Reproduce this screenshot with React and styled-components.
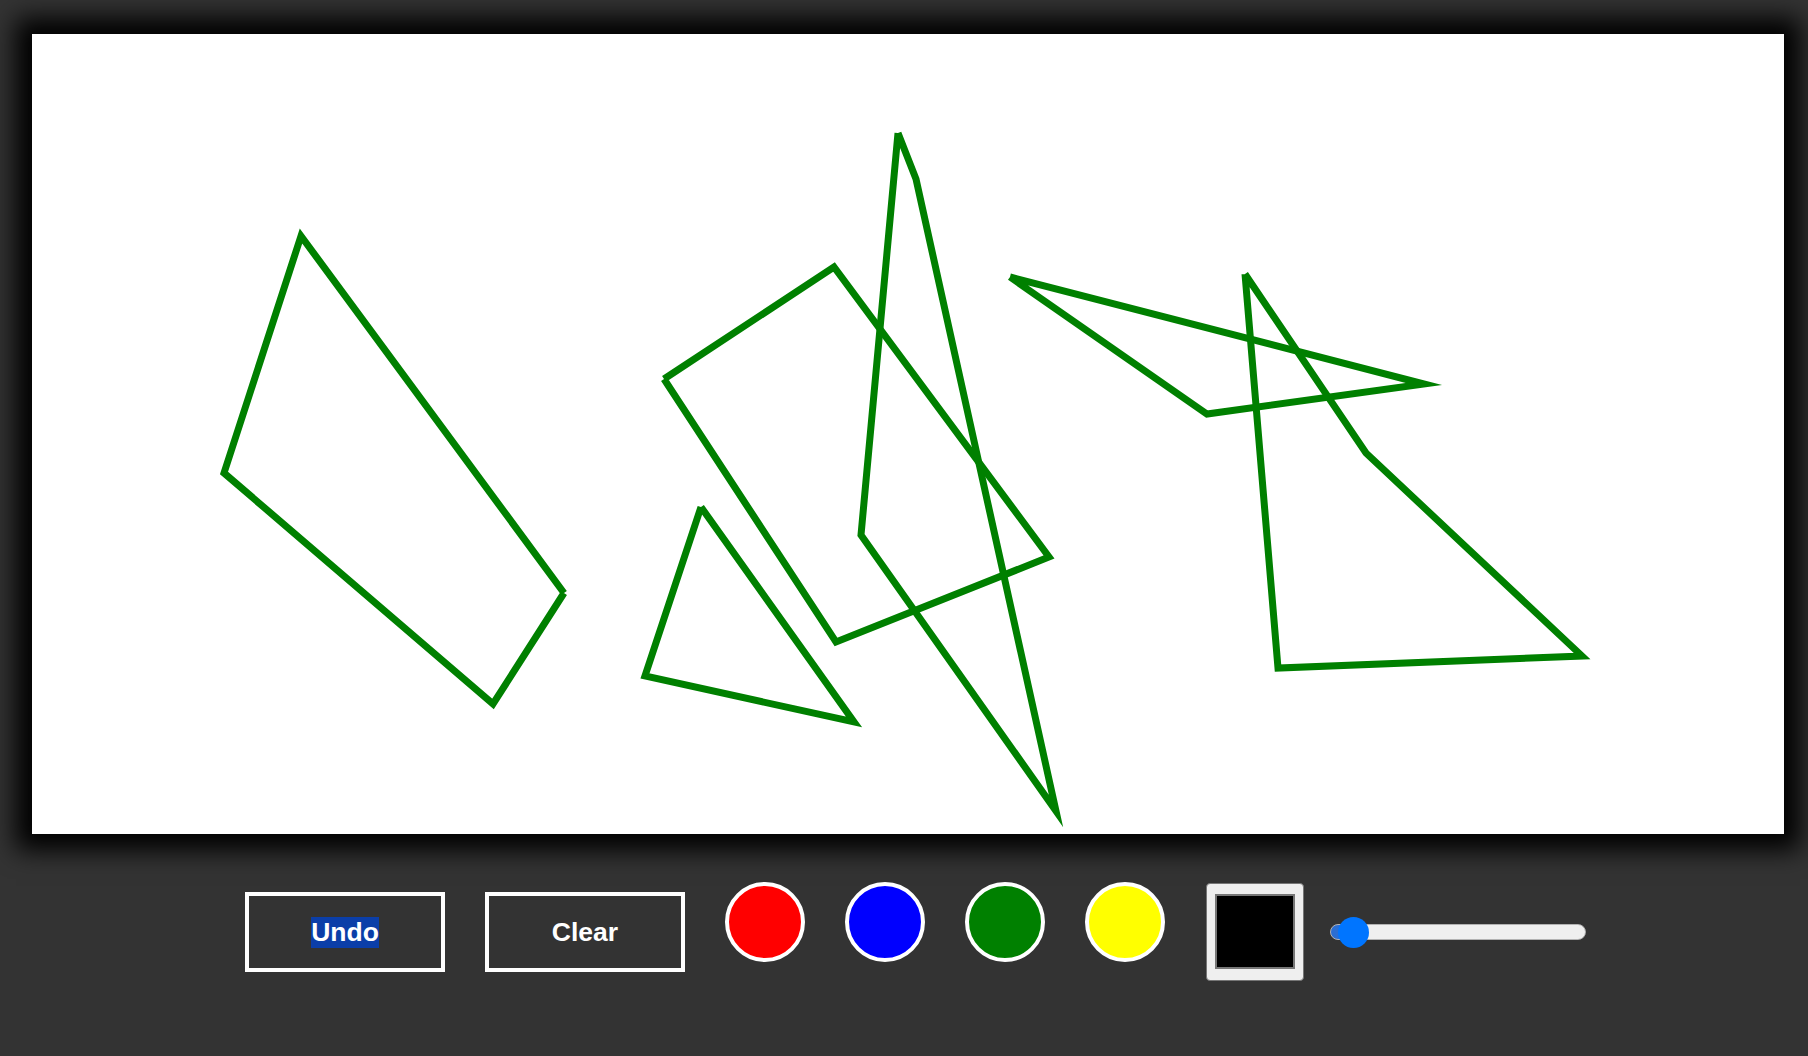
import React from 'react';
import styled, { createGlobalStyle } from 'styled-components';

const GlobalStyle = createGlobalStyle`
  html, body {
    margin: 0;
    padding: 0;
    background: #333333;
  }
  body {
    font-family: "Liberation Sans", Arial, sans-serif;
  }
`;

const Page = styled.div`
  box-sizing: border-box;
  min-height: 100vh;
  padding: 34px 24px 0 32px;
`;

const Board = styled.div`
  width: 1752px;
  height: 800px;
  background: #ffffff;
  box-shadow: 0 0 24px 16px #000000;
`;

const Sketch = styled.svg`
  display: block;
  width: 100%;
  height: 100%;
`;

const Stroke = styled.polyline`
  fill: none;
  stroke: #008000;
  stroke-width: 7;
  stroke-linejoin: miter;
  stroke-miterlimit: 10;
  stroke-linecap: butt;
`;

const Toolbar = styled.div`
  display: flex;
  align-items: center;
  margin-top: 48px;
  padding-left: 213px;
`;

const ActionButton = styled.button`
  box-sizing: border-box;
  display: flex;
  align-items: center;
  justify-content: center;
  width: 200px;
  height: 80px;
  margin: 0 0 0 ${(p) => p.$offset || 0}px;
  padding: 0;
  border: 4px solid #ffffff;
  background: transparent;
  color: #ffffff;
  font-family: "Liberation Sans", Arial, sans-serif;
  font-weight: bold;
  font-size: 26.5px;
  line-height: 31px;
  cursor: pointer;
`;

const Selected = styled.span`
  background: #0b3ea8;
  color: #ffffff;
`;

const Swatch = styled.button`
  box-sizing: border-box;
  width: 80px;
  height: 80px;
  margin: 0 0 20px 40px;
  padding: 0;
  border: 4px solid #ffffff;
  border-radius: 50%;
  background: ${(p) => p.$color};
  cursor: pointer;
`;

const ColorPicker = styled.input.attrs({ type: 'color' })`
  -webkit-appearance: none;
  appearance: none;
  box-sizing: border-box;
  width: 98px;
  height: 98px;
  margin: 0 0 0 41px;
  padding: 10px 8px 11px;
  border: 1px solid #767676;
  border-radius: 4px;
  background: #efefef;
  cursor: pointer;

  &::-webkit-color-swatch-wrapper {
    padding: 0;
  }
  &::-webkit-color-swatch {
    border: 2px solid #777777;
    border-radius: 0;
  }
`;

const SizeSlider = styled.input.attrs({ type: 'range' })`
  -webkit-appearance: none;
  appearance: none;
  width: 256px;
  height: 32px;
  margin: 0 0 0 26px;
  padding: 0;
  background: transparent;

  &::-webkit-slider-runnable-track {
    box-sizing: border-box;
    height: 16px;
    border: 1px solid #b2b2b2;
    border-radius: 8px;
    background: linear-gradient(to right, #2c6ed1 0, #2c6ed1 22px, #efefef 22px);
  }
  &::-webkit-slider-thumb {
    -webkit-appearance: none;
    appearance: none;
    width: 31px;
    height: 31px;
    margin-top: -8.5px;
    border: none;
    border-radius: 50%;
    background: #0075ff;
  }
`;

const shapes = [
  [[532, 559], [269, 202], [192, 439], [461, 670], [532, 559]],
  [[632, 345], [802, 233], [1017, 523], [804, 608], [632, 345]],
  [[669, 473], [613, 642], [822, 688], [669, 473]],
  [[866, 99], [884, 145], [1024, 777], [829, 501], [866, 99]],
  [[978, 243], [1392, 350], [1175, 380], [978, 243]],
  [[1213, 240], [1334, 419], [1550, 622], [1246, 634], [1213, 240]],
];

const colors = ['#ff0000', '#0000ff', '#008000', '#ffff00'];

export default function App() {
  return (
    <>
      <GlobalStyle />
      <Page>
        <Board>
          <Sketch viewBox="0 0 1752 800">
            {shapes.map((pts, i) => (
              <Stroke key={i} points={pts.map((p) => p.join(',')).join(' ')} />
            ))}
          </Sketch>
        </Board>
        <Toolbar>
          <ActionButton>
            <Selected>Undo</Selected>
          </ActionButton>
          <ActionButton $offset={40}>Clear</ActionButton>
          {colors.map((c) => (
            <Swatch key={c} $color={c} aria-label={c} />
          ))}
          <ColorPicker defaultValue="#000000" />
          <SizeSlider min={0} max={100} defaultValue={3} />
        </Toolbar>
      </Page>
    </>
  );
}
